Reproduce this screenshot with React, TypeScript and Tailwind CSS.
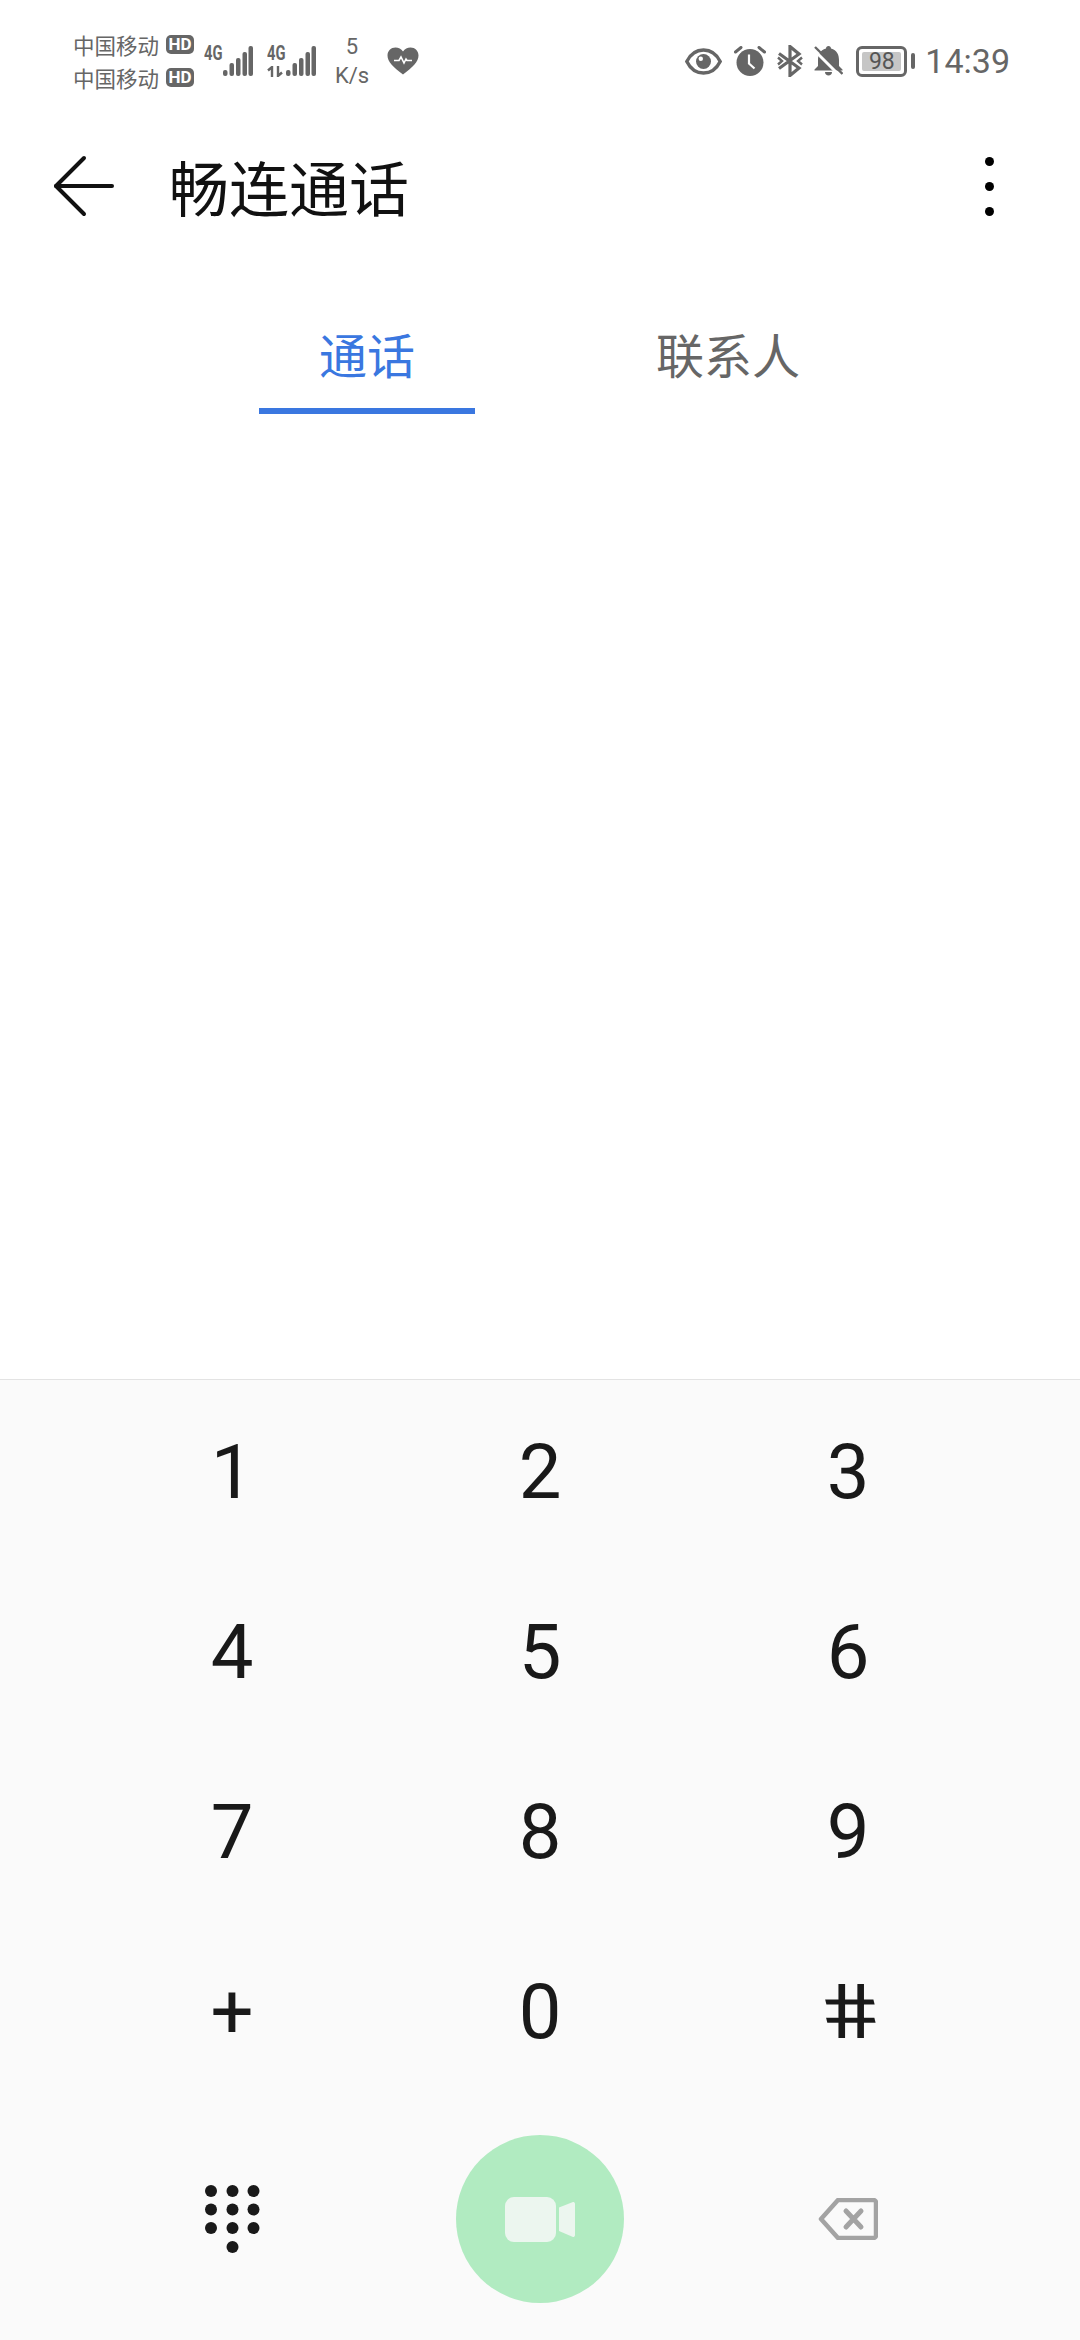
const dialKeys = ["1", "2", "3", "4", "5", "6", "7", "8", "9", "+", "0", "#"];
const keypadDots = [
  [6, 6], [27.5, 6], [48.5, 6],
  [6, 24.5], [27.5, 24.5], [48.5, 24.5],
  [6, 43], [27.5, 43], [48.5, 43],
  [27.5, 62],
];

const Carrier = () => (
  <div className="flex items-center h-[33px]">
    <span className="text-[21.5px] leading-none text-[#666666] whitespace-nowrap">中国移动</span>
    <span className="ml-[7px] w-[28px] h-[19px] rounded-[5px] bg-[#666666] text-white text-[17px] font-bold leading-[19px] text-center font-['Roboto']">
      HD
    </span>
  </div>
);

const Bars = () => (
  <svg width="30" height="32" viewBox="0 0 30 32" fill="#666666">
    <rect x="0" y="25" width="4.500" height="6" rx="2" />
    <rect x="6.500" y="18" width="4.500" height="13" rx="2" />
    <rect x="13" y="13" width="4.500" height="18" rx="2" />
    <rect x="19.500" y="7" width="4.500" height="24" rx="2" />
    <rect x="25.500" y="1" width="4.500" height="30" rx="2" />
  </svg>
);

const Signal = ({ arrows }: { arrows?: boolean }) => (
  <div className="flex items-start h-[32px]">
    <div className="w-[19px] flex flex-col">
      <span className="text-[21px] font-bold leading-[17px] text-[#666666] font-['Roboto'] origin-top-left scale-x-[0.7] whitespace-nowrap">4G</span>
      {arrows && (
        <svg className="mt-[4px]" width="17" height="11" viewBox="0 0 17 11" fill="none" stroke="#666666" strokeWidth="2.400">
          <path d="M5 11V1L1 4.500" />
          <path d="M11 0v10l4-3.500" />
        </svg>
      )}
    </div>
    <Bars />
  </div>
);

const Heart = () => (
  <svg width="32" height="28" viewBox="0 0 32 28">
    <path d="M16 27.500C6 20 .5 14.500.5 8.500.5 3.800 4 .5 8.500.5c3 0 5.800 1.500 7.500 4 1.700-2.500 4.500-4 7.500-4C28 .5 31.500 3.800 31.500 8.500c0 6-5.500 11.500-15.500 19z" fill="#666666" />
    <path d="M7 13.500h5l2-3.500 3 6 2-4 1 1.500h5" fill="none" stroke="#ffffff" strokeWidth="1.600" />
  </svg>
);

const Eye = () => (
  <svg width="37" height="27" viewBox="0 0 37 27">
    <path d="M1.800 13.500C5.500 6 11.500 2 18.500 2s13 4 16.700 11.500C31.500 21 25.500 25 18.500 25S5.500 21 1.800 13.500z" fill="none" stroke="#666666" strokeWidth="3.400" />
    <circle cx="18.500" cy="13.500" r="7.500" fill="#666666" />
    <circle cx="15.800" cy="10.800" r="2.200" fill="#ffffff" />
  </svg>
);

const Alarm = () => (
  <svg width="32" height="30" viewBox="0 0 32 30">
    <circle cx="16" cy="16.500" r="13.500" fill="#666666" />
    <path d="M15 8.500v9l5.500 5" fill="none" stroke="#ffffff" strokeWidth="2.200" />
    <path d="M1.500 6 7 1.500M30.500 6 25 1.500" fill="none" stroke="#666666" strokeWidth="3" strokeLinecap="round" />
  </svg>
);

const Bluetooth = () => (
  <svg width="26" height="32" viewBox="0 0 26 32" fill="none" stroke="#666666" strokeWidth="3.200">
    <path d="M2 8.500 22 23 13 30.500V1.500L22 9 2 23.500" />
    <path d="M1 12.500 5 16l-4 3.500M25 12.500 21 16l4 3.500" strokeWidth="2.400" />
  </svg>
);

const BellOff = () => (
  <svg width="29" height="30" viewBox="0 0 29 30">
    <path d="M14.500 0c1.500 0 2.500 1 2.500 2.500C23 4 25 9 25 14v6l3.500 3.500v1H.5v-1L4 20v-6C4 9 6 4 12 2.500 12 1 13 0 14.500 0z" fill="#666666" />
    <path d="M11 26h7c0 2.200-1.500 3.500-3.500 3.500S11 28.200 11 26z" fill="#666666" />
    <path d="M0 4 25 29" stroke="#ffffff" strokeWidth="3" />
    <path d="M1 1 28.500 28" stroke="#666666" strokeWidth="2.400" />
  </svg>
);

const Battery = () => (
  <div className="flex items-center">
    <div className="w-[51px] h-[31px] border-[3px] border-[#666666] rounded-[6px] p-[3px]">
      <div className="w-full h-full rounded-[2px] bg-[#c6c6c6] text-[23px] leading-[19px] text-center text-[#555555] font-['Roboto']">
        98
      </div>
    </div>
    <div className="ml-[4px] w-[4px] h-[16px] rounded-[2px] bg-[#666666]" />
  </div>
);

const VideoIcon = () => (
  <svg width="70" height="45" viewBox="0 0 70 45" fill="#ecf6ef">
    <rect x="0" y="0" width="51" height="45" rx="9" />
    <path d="M54 10.500 68 5c1 0 2 .500 2 2v31c0 1.500-1 2-2 2L54 34z" />
  </svg>
);

const DeleteIcon = () => (
  <svg width="60" height="42" viewBox="0 0 60 42" fill="none" stroke="#a3a3a3">
    <path d="M20 2h35.500c1.300 0 2.500 1.200 2.500 2.500v33c0 1.300-1.200 2.500-2.500 2.500H20L3 21z" strokeWidth="4.500" strokeLinejoin="round" />
    <path d="M28 13l15 16M43 13 28 29" strokeWidth="5" strokeLinecap="round" />
  </svg>
);

const BackArrow = () => (
  <svg width="64" height="64" viewBox="0 0 64 64" fill="none" stroke="#111111" strokeWidth="4" strokeLinecap="round" strokeLinejoin="round">
    <path d="M60 32H4" />
    <path d="M32 4 4 32l28 28" />
  </svg>
);

const App = () => {
  return (
    <div className="w-[1080px] h-[2340px] bg-white flex flex-col overflow-hidden font-['Noto_Sans_CJK_SC','Noto_Sans',sans-serif]">
      <div className="h-[122px] shrink-0 flex items-center justify-between pl-[73px] pr-[70px]">
        <div className="flex items-center">
          <div className="flex flex-col">
            <Carrier />
            <Carrier />
          </div>
          <div className="ml-[10px]"><Signal /></div>
          <div className="ml-[14px]"><Signal arrows /></div>
          <div className="ml-[18px] w-[36px] flex flex-col items-center text-[22px] leading-[29px] text-[#666666] font-['Roboto']">
            <span>5</span>
            <span>K/s</span>
          </div>
          <div className="ml-[17px]"><Heart /></div>
        </div>
        <div className="flex items-center">
          <Eye />
          <div className="ml-[12px]"><Alarm /></div>
          <div className="ml-[11px]"><Bluetooth /></div>
          <div className="ml-[11px]"><BellOff /></div>
          <div className="ml-[13px]"><Battery /></div>
          <span className="ml-[10px] text-[34px] leading-none text-[#666666] font-['Roboto']">14:39</span>
        </div>
      </div>

      <div className="h-[128px] shrink-0 flex items-center pl-[52px] pr-[86px]">
        <BackArrow />
        <h1 className="ml-[53px] text-[60px] leading-none font-normal text-[#111111] flex-1">畅连通话</h1>
        <div className="flex flex-col gap-[16px]">
          <div className="w-[9px] h-[9px] rounded-full bg-black" />
          <div className="w-[9px] h-[9px] rounded-full bg-black" />
          <div className="w-[9px] h-[9px] rounded-full bg-black" />
        </div>
      </div>

      <div className="mt-[73px] flex pl-[259px] gap-[145px] shrink-0">
        <div className="w-[216px] flex flex-col items-center">
          <span className="text-[48px] leading-[60px] text-[#3a77e0]">通话</span>
          <div className="mt-[25px] w-full h-[6px] bg-[#3a77e0]" />
        </div>
        <div className="w-[216px] flex flex-col items-center">
          <span className="text-[48px] leading-[60px] text-[#666666]">联系人</span>
        </div>
      </div>

      <div className="flex-1" />

      <div className="h-[961px] shrink-0 bg-[#fafafa] border-t border-[#e3e3e3] pt-[2px]">
        <div className="grid grid-cols-3 px-[78px]">
          {dialKeys.map((key) => (
            <div key={key} className="h-[180px] flex items-center justify-center text-[76px] font-normal leading-none text-[#191919] font-['Roboto']">
              {key === "#" ? <span className="skew-x-[11deg] scale-x-[1.25]">#</span> : key}
            </div>
          ))}
        </div>
        <div className="mt-[33px] grid grid-cols-3 px-[78px] items-center">
          <div className="flex justify-center">
            <svg width="55" height="68" viewBox="0 0 55 68" fill="#191919">
              {keypadDots.map(([cx, cy]) => (
                <circle key={`${cx}-${cy}`} cx={cx} cy={cy} r="6" />
              ))}
            </svg>
          </div>
          <div className="flex justify-center">
            <button className="w-[168px] h-[168px] rounded-full bg-[#b1ebc1] flex items-center justify-center">
              <VideoIcon />
            </button>
          </div>
          <div className="flex justify-center">
            <DeleteIcon />
          </div>
        </div>
      </div>
    </div>
  );
};

export default App;
